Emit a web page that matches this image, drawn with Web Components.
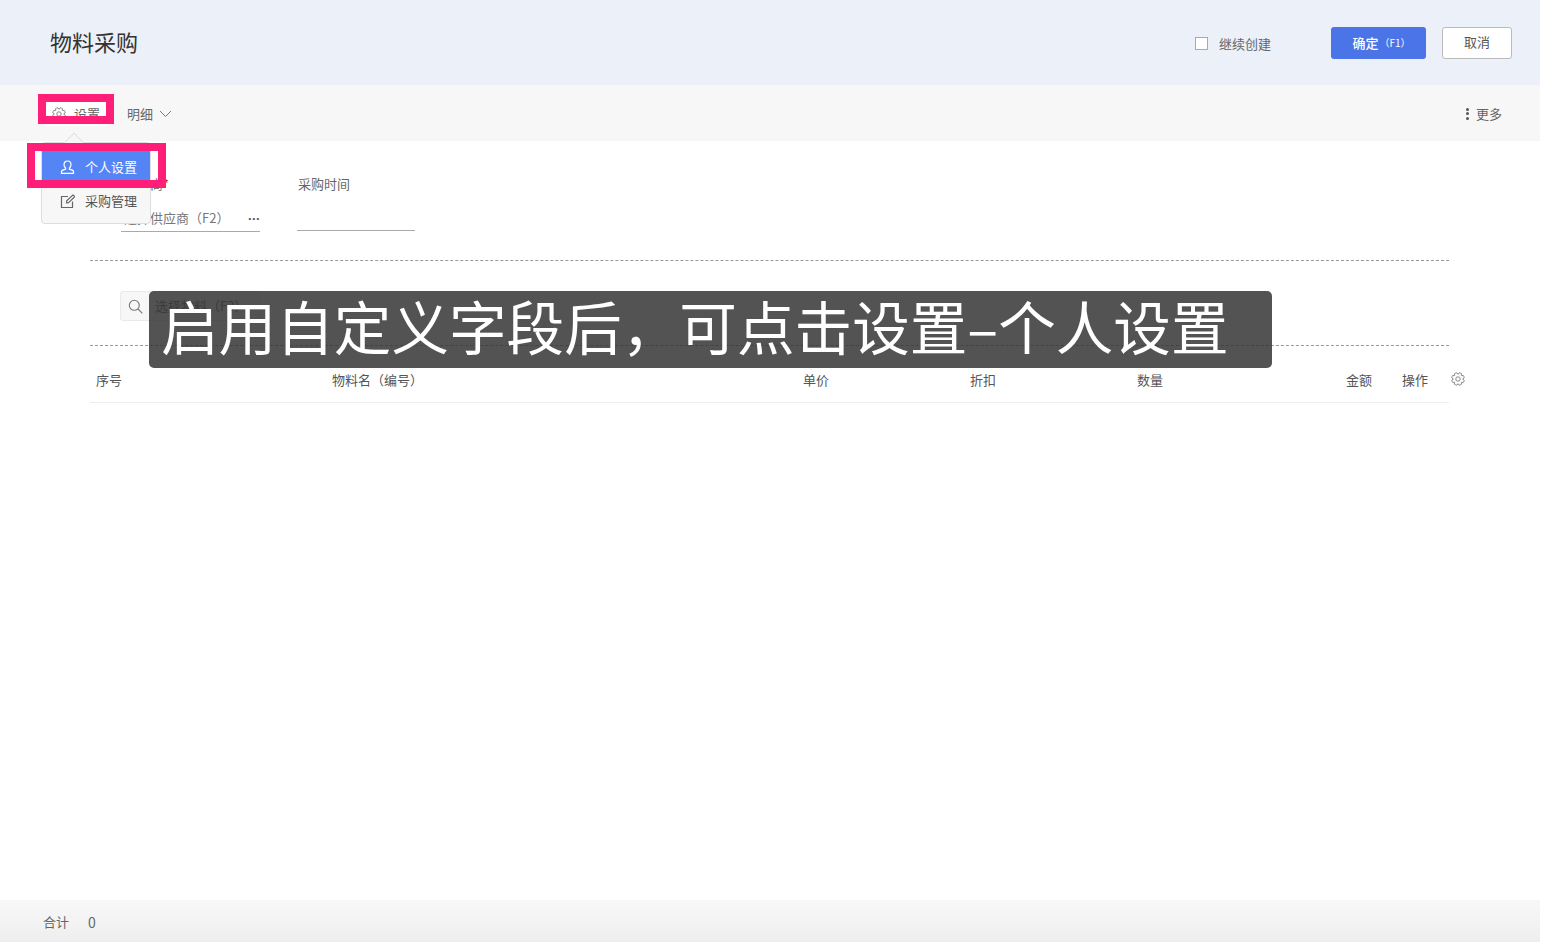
<!DOCTYPE html>
<html lang="zh"><head><meta charset="utf-8"><title>物料采购</title>
<style>
html,body{margin:0;padding:0;background:#fff}
body{font:13px/18px "Noto Sans CJK SC","Noto Sans",sans-serif;color:#555;width:1541px;height:942px;overflow:hidden;position:relative}
purchase-page{width:1540px;height:942px}
</style></head><body>
<purchase-page>
  <page-header slot="header" title-text="物料采购"></page-header>
  <page-toolbar slot="toolbar"></page-toolbar>
  <order-form slot="main"></order-form>
  <search-box slot="main" placeholder="选择物料（F3）"></search-box>
  <table-head slot="main"></table-head>
  <page-footer slot="footer"></page-footer>
  <settings-menu slot="over"></settings-menu>
  <mark-box slot="over" style="left:38px;top:94px;width:76px;height:29.500px"></mark-box>
  <mark-box slot="over" style="left:27px;top:143px;width:138.500px;height:45px"></mark-box>
  <caption-bar slot="over">启用自定义字段后，可点击设置–个人设置</caption-bar>
</purchase-page>
<script>
function gear(size,color){
  const c=12,n=8;let d='';
  for(let i=0;i<n;i++){
    const a=i*2*Math.PI/n+Math.PI/8,w=.2;
    const P=(r,t)=>(c+r*Math.cos(t)).toFixed(2)+' '+(c+r*Math.sin(t)).toFixed(2);
    d+=(i?'L':'M')+P(8.3,a-.35)+'L'+P(10.9,a-w)+'A11 11 0 0 1 '+P(10.9,a+w)+'L'+P(8.3,a+.35);
  }
  d+='Z';
  return `<svg width="${size}" height="${size}" viewBox="0 0 24 24" fill="none" stroke="${color}" stroke-width="1.5" stroke-linejoin="round"><path d="${d}"/><circle cx="12" cy="12" r="3.8"/></svg>`;
}
function def(name,css,html){
  customElements.define(name,class extends HTMLElement{
    constructor(){super();const r=this.attachShadow({mode:'open'});
      r.innerHTML=`<style>${css}</style>`+(typeof html==='function'?html(this):html);}
  });
}
def('purchase-page',`
:host{display:flex;flex-direction:column;position:relative;overflow:hidden;background:#fff}
main{flex:1;display:flex;flex-direction:column;padding:0 91px 0 90px;min-height:0}
`,`<slot name="header"></slot><slot name="toolbar"></slot><main><slot name="main"></slot></main><slot name="footer"></slot><slot name="over"></slot>`);

def('page-header',`
:host{display:flex;align-items:center;height:85px;background:#ecf0f8;padding:0 28px 0 50px;flex:none}
h1{margin:-3px 0 0;font-size:22px;font-weight:400;color:#333;line-height:30px;flex:1}
.chk{width:11px;height:11px;border:1px solid #aaa;background:#fff;margin:1px 11px 0 0}
.lbl{color:#666;font-size:13px;margin-right:60px;margin-top:2px}
.ok{width:95px;height:32px;border-radius:3px;background:#4b74e8;color:#fff;display:flex;align-items:center;justify-content:center;box-sizing:border-box;margin-right:16px;font-size:13px;font-weight:500;padding-left:6px}
.ok small{font-size:10px;font-weight:400;margin-left:1px}
.no{width:70px;height:32px;box-sizing:border-box;border:1px solid #bbb;border-radius:3px;background:#fff;color:#555;display:flex;align-items:center;justify-content:center;padding-bottom:2px}
`,h=>`<h1>${h.getAttribute('title-text')}</h1><span class="chk"></span><span class="lbl">继续创建</span><span class="ok">确定<small>（F1）</small></span><span class="no">取消</span>`);

def('page-toolbar',`
:host{display:flex;align-items:center;height:56px;background:#f7f7f7;flex:none;padding:0 38px 0 46px;color:#666}
.set{width:60px;height:24px;background:#fff;display:flex;align-items:center;justify-content:center;gap:8px;box-sizing:border-box;margin-top:2px}
.d{margin-left:21px;display:flex;align-items:center;gap:6px;margin-top:1px}
.sp{flex:1}
.more{display:flex;align-items:center;gap:7px;margin-top:1px}
i{display:block;width:3px;height:3px;border-radius:50%;background:#555;margin:1.5px 0}
`,()=>`<span class="set">${gear(14,'#777')}<span>设置</span></span>
<span class="d">明细<svg width="13" height="8" viewBox="0 0 13 8" fill="none" stroke="#777"><path d="M1 1l5.500 5.500L12 1"/></svg></span>
<span class="sp"></span><span class="more"><span><i></i><i></i><i></i></span>更多</span>`);

def('order-form',`
:host{display:flex;height:120px;box-sizing:border-box;border-bottom:1px dashed #999;padding:35px 0 0 31px;gap:37px;flex:none;color:#666}
.f{display:flex;flex-direction:column}
.l{line-height:16px;height:16px;padding-left:3px;white-space:nowrap}
.l em{color:#d22;font-style:normal}
.v{height:40px;border-bottom:1px solid #aaa;box-sizing:border-box;display:flex;align-items:flex-end;justify-content:space-between;padding:0 0 4px 3px;color:#777;white-space:nowrap}
.a{width:139px}.b{width:118px}
.b .v{height:39px}
.dots{font-family:"Liberation Sans",sans-serif;font-weight:700;color:#555;line-height:14px;letter-spacing:-.3px;padding-bottom:1px}
`,`<div class="f a"><span class="l">供应商<em>*</em></span><span class="v"><span>选择供应商（F2）</span><span class="dots">···</span></span></div>
<div class="f b"><span class="l" style="padding-left:1px">采购时间</span><span class="v"></span></div>`);

def('search-box',`
:host{display:flex;align-items:flex-start;height:85px;box-sizing:border-box;padding:30px 0 0 30px;border-bottom:1px dashed #999;flex:none}
.s{width:140px;height:30px;box-sizing:border-box;border:1px solid #eaeaea;border-radius:3px;background:#f7f7f7;display:flex;align-items:center;padding-left:7px;gap:12px;color:#666;white-space:nowrap}
`,h=>`<div class="s"><svg width="15" height="15" viewBox="0 0 15 15" fill="none" stroke="#777" stroke-width="1.100"><circle cx="6.300" cy="6.300" r="5"/><path d="M10 10l4.400 4.400"/></svg><span>${h.getAttribute('placeholder')}</span></div>`);

def('table-head',`
:host{display:grid;grid-template-columns:236px 471px 167px 167px 209px 56px 1fr;align-items:center;height:57px;box-sizing:border-box;border-bottom:1px solid #eee;padding:12px 0 0 6px;position:relative;flex:none;color:#555}
svg{position:absolute;left:1361px;top:26px}
`,()=>`<span>序号</span><span>物料名（编号）</span><span>单价</span><span>折扣</span><span>数量</span><span>金额</span><span>操作</span>${gear(14,'#777')}`);

def('page-footer',`
:host{display:flex;align-items:center;gap:19px;height:42px;box-sizing:border-box;padding:2px 0 0 43px;flex:none;background:linear-gradient(#f8f8f8,#eeeeee);color:#666}
b{font-weight:400;font-size:14px;margin-top:-1px}
`,`<span>合计</span><b>0</b>`);

def('settings-menu',`
:host{position:absolute;left:41px;top:142px;width:110px;height:82px;box-sizing:border-box;background:#f7f7f7;border:1px solid #ddd;border-radius:4px;color:#555}
.arrow{position:absolute;left:23px;top:-7px;width:18px;height:18px;transform:rotate(45deg);background:#f7f7f7;border:1px solid #ddd;border-right:0;border-bottom:0;box-sizing:border-box;clip-path:polygon(0 0,100% 0,0 100%)}
.i{position:absolute;left:0;right:0;height:34px;display:flex;align-items:center;padding-left:18px;gap:10px;box-sizing:border-box}
.on{top:7px;background:#5585f5;color:#fff}
.off{top:41px}
`,`<div class="arrow"></div>
<div class="i on"><svg width="15" height="15" viewBox="0 0 15 15" fill="none" stroke="#fff" stroke-width="1.200"><path d="M7.500 1c2.200 0 3.500 1.600 3.500 3.700 0 1.300-.6 2.500-1.600 3.300v1.100c1.800.5 3.600 1.100 4.100 2v2.300H1.500V11.100c.5-.9 2.300-1.500 4.100-2V8C4.600 7.200 4 6 4 4.700 4 2.600 5.300 1 7.500 1z"/></svg>个人设置</div>
<div class="i off"><svg width="15" height="15" viewBox="0 0 15 15" fill="none" stroke="#666" stroke-width="1.200"><path d="M12.500 7.500v6h-11v-11h6.500"/><path d="M6.500 9l.3-2.300L13 .9l1.700 1.700-6 6z" stroke-linejoin="round"/></svg>采购管理</div>`);

def('mark-box',`
:host{position:absolute;box-sizing:border-box;border:8px solid #ff1f78;display:block}
`,`<slot></slot>`);

def('caption-bar',`
:host{position:absolute;left:149px;top:291px;width:1123px;height:77px;box-sizing:border-box;padding-left:12px;background:rgba(50,50,50,.84);border-radius:5px;color:#fff;font-size:57.600px;line-height:68px;white-space:nowrap;font-weight:400;display:block}
`,`<slot></slot>`);
</script>
</body></html>
